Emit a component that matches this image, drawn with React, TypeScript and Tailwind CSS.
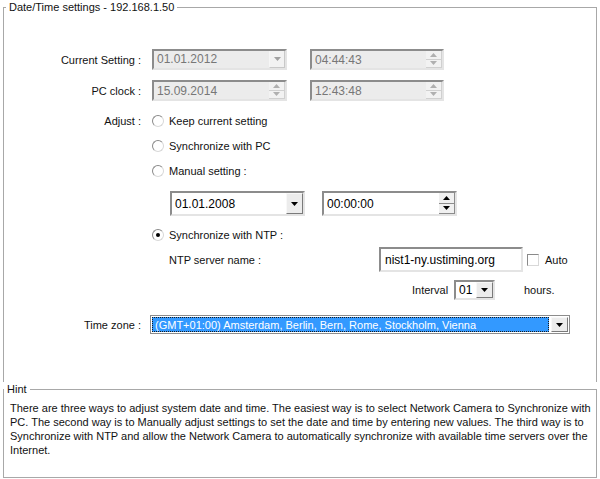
import React from "react"

const Arrow = ({ dir = "down", color = "#000" }: { dir?: "up" | "down"; color?: string }) => (
    <svg width="7" height="4" viewBox="0 0 7 4">
        {dir === "down" ? <path d="M0 0h7L3.5 4z" fill={color} /> : <path d="M0 4h7L3.5 0z" fill={color} />}
    </svg>
)

const inset = "border-2 border-t-[#8c8c8c] border-l-[#8c8c8c] border-b-[#e4e4e4] border-r-[#e4e4e4]"

const DisabledCombo = ({ value }: { value: string }) => (
    <div className={`flex w-[135px] h-[21px] bg-[#ececec] ${inset}`}>
        <span className="flex-1 pl-[3px] text-[12px] leading-[17px] text-[#777]">{value}</span>
        <div className="w-[16px] flex items-center justify-center border-l border-[#f6f6f6] border-r border-r-[#c8c8c8] border-b border-b-[#c8c8c8] bg-[#f2f2f2]">
            <Arrow color="#a0a0a0" />
        </div>
    </div>
)

const Spinner = ({ value, disabled }: { value: string; disabled?: boolean }) => (
    <div className={`flex h-full ${disabled ? "bg-[#ececec]" : "bg-white"} ${inset}`}>
        <span className={`flex-1 pl-[3px] text-[12px] self-center ${disabled ? "text-[#777]" : "text-black"}`}>{value}</span>
        <div className="w-[16px] flex flex-col">
            {(["up", "down"] as const).map((d) => (
                <div key={d} className={`flex-1 flex items-center justify-center border-r border-b ${disabled ? "border-[#d0d0d0] bg-[#f2f2f2]" : "border-[#8c8c8c] bg-[#f0f0f0]"}`}>
                    <Arrow dir={d} color={disabled ? "#b0b0b0" : "#000"} />
                </div>
            ))}
        </div>
    </div>
)

const Combo = ({ value, width }: { value: string; width: string }) => (
    <div className={`flex h-full bg-white ${width} ${inset}`}>
        <span className="flex-1 pl-[3px] text-[12px] self-center text-black">{value}</span>
        <div className="w-[17px] flex items-center justify-center bg-[#ececec] border border-[#f8f8f8] border-r-[#7a7a7a] border-b-[#7a7a7a]">
            <Arrow />
        </div>
    </div>
)

const Radio = ({ label, checked }: { label: string; checked?: boolean }) => (
    <div className="flex items-center gap-[5px] h-[25px]">
        <div className="w-[12px] h-[12px] rounded-full border border-[#8a8a8a] border-b-[#d8d8d8] border-r-[#d8d8d8] bg-white flex items-center justify-center">
            {checked && <div className="w-[4px] h-[4px] rounded-full bg-black" />}
        </div>
        <span>{label}</span>
    </div>
)

export default function App() {
    return (
        <div className="w-[600px] h-[479px] bg-white text-[11px] leading-[14px] text-[#111]" style={{ fontFamily: '"Liberation Sans", Arial, sans-serif' }}>
            <fieldset className="mx-[3px] h-[382px] border border-b-0 border-[#a8a8a8]">
                <legend className="ml-[2px] px-[3px]">Date/Time settings - 192.168.1.50</legend>
                <div className="grid grid-cols-[137px_1fr] gap-x-[11px] pt-[35px]">
                    <div className="h-[21px] flex items-center justify-end">Current Setting :</div>
                    <div className="h-[21px] flex gap-[23px]">
                        <DisabledCombo value="01.01.2012" />
                        <div className="w-[134px]"><Spinner value="04:44:43" disabled /></div>
                    </div>

                    <div className="h-[21px] mt-[10px] flex items-center justify-end">PC clock :</div>
                    <div className="h-[21px] mt-[10px] flex gap-[23px]">
                        <div className="w-[135px]"><Spinner value="15.09.2014" disabled /></div>
                        <div className="w-[134px]"><Spinner value="12:43:48" disabled /></div>
                    </div>

                    <div className="h-[25px] mt-[7px] flex items-center justify-end">Adjust :</div>
                    <div className="mt-[7px] flex flex-col">
                        <Radio label="Keep current setting" />
                        <Radio label="Synchronize with PC" />
                        <Radio label="Manual setting :" />
                        <div className="h-[25px] mt-[8px] ml-[18px] flex gap-[17px]">
                            <Combo value="01.01.2008" width="w-[135px]" />
                            <div className="w-[135px]"><Spinner value="00:00:00" /></div>
                        </div>
                        <div className="mt-[6px]">
                            <Radio label="Synchronize with NTP :" checked />
                        </div>
                        <div className="h-[25px] flex items-center">
                            <span className="ml-[17px] w-[210px]">NTP server name :</span>
                            <div className={`w-[144px] h-full flex items-center pl-[4px] bg-white text-[12px] text-black ${inset}`}>nist1-ny.ustiming.org</div>
                            <div className="ml-[4px] w-[12px] h-[12px] border border-[#8a8a8a] border-b-[#d8d8d8] border-r-[#d8d8d8] bg-white" />
                            <span className="ml-[6px]">Auto</span>
                        </div>
                        <div className="h-[20px] mt-[8px] flex items-center">
                            <span className="ml-[260px] w-[42px]">Interval</span>
                            <Combo value="01" width="w-[41px]" />
                            <span className="ml-[29px]">hours.</span>
                        </div>
                    </div>

                    <div className="h-[19px] mt-[15px] flex items-center justify-end">Time zone :</div>
                    <div className="h-[19px] mt-[15px] -ml-[2px] w-[420px] flex border border-[#8c8c8c] bg-white p-[1px]">
                        <div className="flex-1 flex items-center bg-[#3399ff] text-white pl-[3px] outline-1 outline-dotted outline-[#1a1a1a] -outline-offset-1">
                            (GMT+01:00) Amsterdam, Berlin, Bern, Rome, Stockholm, Vienna
                        </div>
                        <div className="w-[17px] ml-[2px] flex items-center justify-center bg-[#ececec] border border-[#f8f8f8] border-r-[#7a7a7a] border-b-[#7a7a7a]">
                            <Arrow />
                        </div>
                    </div>
                </div>
            </fieldset>

            <fieldset className="mx-[3px] h-[96px] border border-[#a8a8a8]">
                <legend className="px-[3px]">Hint</legend>
                <div className="pl-[6px] pt-[5px] text-[#111]">
                    <span className="block whitespace-nowrap">There are three ways to adjust system date and time. The easiest way is to select Network Camera to Synchronize with</span>
                    <span className="block whitespace-nowrap">PC. The second way is to Manually adjust settings to set the date and time by entering new values. The third way is to</span>
                    <span className="block whitespace-nowrap">Synchronize with NTP and allow the Network Camera to automatically synchronize with available time servers over the</span>
                    <span className="block whitespace-nowrap">Internet.</span>
                </div>
            </fieldset>
        </div>
    )
}
